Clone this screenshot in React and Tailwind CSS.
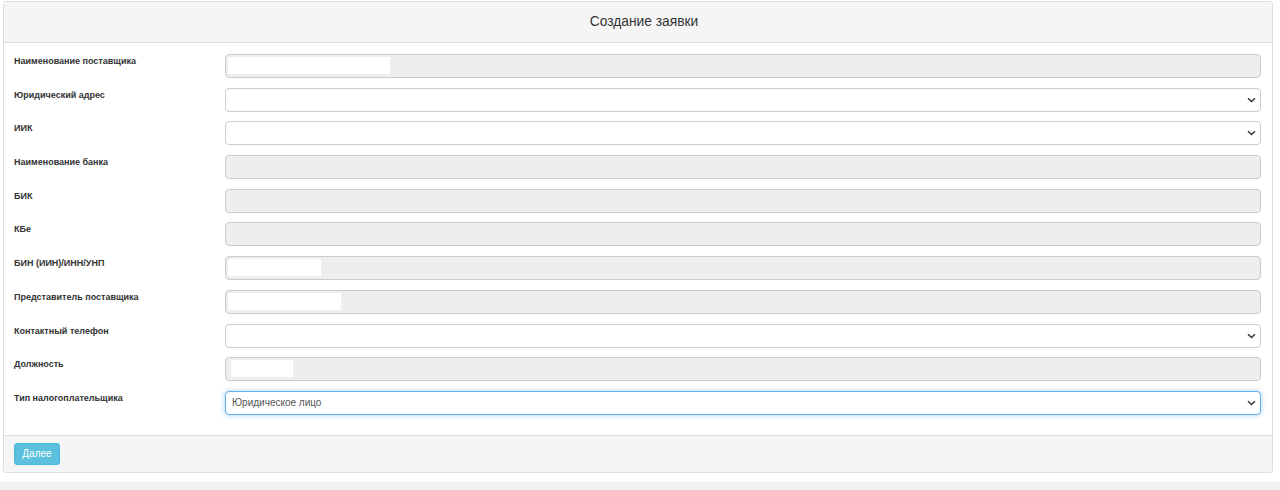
import React from 'react';

const fields = [
  { label: 'Наименование поставщика', type: 'disabled', mask: 'w-[162px]' },
  { label: 'Юридический адрес', type: 'select' },
  { label: 'ИИК', type: 'select' },
  { label: 'Наименование банка', type: 'disabled' },
  { label: 'БИК', type: 'disabled' },
  { label: 'КБе', type: 'disabled' },
  { label: 'БИН (ИИН)/ИНН/УНП', type: 'disabled', mask: 'w-[93px]' },
  { label: 'Представитель поставщика', type: 'disabled', mask: 'w-[113px]' },
  { label: 'Контактный телефон', type: 'select' },
  { label: 'Должность', type: 'disabled', mask: 'w-[62px] ml-[3px]' },
  { label: 'Тип налогоплательщика', type: 'select', value: 'Юридическое лицо', focused: true },
];

const Chevron = () => (
  <svg width="9" height="6" viewBox="0 0 9 6" className="absolute right-[4px] top-1/2 -translate-y-1/2">
    <path d="M1 1.2 L4.5 4.6 L8 1.2" fill="none" stroke="#333" strokeWidth="1.4" />
  </svg>
);

const Field = ({ field }) => {
  if (field.type === 'disabled') {
    return (
      <div className="relative h-[24px] flex-1 rounded-[4px] border border-[#cccccc] bg-[#eeeeee]">
        {field.mask && (
          <div className={`absolute left-[2px] top-[2px] h-[17px] bg-white ${field.mask}`} />
        )}
      </div>
    );
  }
  return (
    <div
      className={`relative h-[24px] flex-1 rounded-[4px] border bg-white flex items-center pl-[6px] text-[10px] text-[#555] ${
        field.focused
          ? 'border-[#66afe9] shadow-[0_0_5px_rgba(102,175,233,0.6)]'
          : 'border-[#cccccc]'
      }`}
    >
      {field.value}
      <Chevron />
    </div>
  );
};

export default function App() {
  return (
    <div className="w-[1280px] h-[490px] bg-white overflow-hidden" style={{ fontFamily: '"Liberation Sans", Arial, sans-serif' }}>
      <div className="ml-[3px] mt-[1px] w-[1270px] border border-[#dddddd] rounded-[3px]">
        <div className="h-[41px] bg-[#f5f5f5] border-b border-[#dddddd] flex items-center justify-center pl-[12px] text-[13.8px] text-[#333]">
          Создание заявки
        </div>
        <div className="pt-[11px] pb-[20px] pl-[10px] pr-[11px] flex flex-col gap-[9.7px]">
          {fields.map((f) => (
            <div key={f.label} className="flex items-start">
              <div className="w-[211px] pt-[1px] text-[9px] font-bold text-[#333] leading-[12px]">
                {f.label}
              </div>
              <Field field={f} />
            </div>
          ))}
        </div>
        <div className="h-[37px] bg-[#f5f5f5] border-t border-[#dddddd] flex items-center pl-[10px]">
          <button className="h-[22px] w-[46px] rounded-[3px] bg-[#5bc0de] border border-[#46b8da] text-white text-[10px]">
            Далее
          </button>
        </div>
      </div>
      <div className="mt-[9px] h-[20px] bg-[#f2f2f2]" />
    </div>
  );
}
